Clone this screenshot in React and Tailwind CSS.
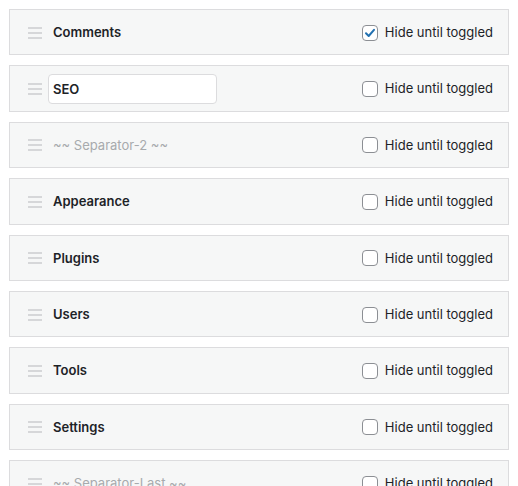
import { useState } from "react";

const items = [
  { label: "Comments", checked: true },
  { label: "SEO", editing: true },
  { label: "~~ Separator-2 ~~", separator: true },
  { label: "Appearance" },
  { label: "Plugins" },
  { label: "Users" },
  { label: "Tools" },
  { label: "Settings" },
  { label: "~~ Separator-Last ~~", separator: true },
];

function Handle() {
  return (
    <div className="flex w-[14px] flex-col gap-[3px]">
      <span className="h-[2px] w-full bg-[#d6d7d9]" />
      <span className="h-[2px] w-full bg-[#d6d7d9]" />
      <span className="h-[2px] w-full bg-[#d6d7d9]" />
    </div>
  );
}

function Row({ item }) {
  const [checked, setChecked] = useState(!!item.checked);
  return (
    <div className="flex h-[46.4px] shrink-0 items-center border border-[#dcdcde] bg-[#f6f7f7] pl-[18px] pr-[15px] pt-[1px]">
      <Handle />
      {item.editing ? (
        <input
          defaultValue={item.label}
          className="ml-[6px] h-[30px] w-[169px] rounded-[4px] border border-[#dcdcde] bg-white px-[4px] text-[13px] font-semibold text-[#1d2327] outline-none"
        />
      ) : (
        <span
          className={
            "ml-[11px] text-[13px] " +
            (item.separator
              ? "font-normal text-[#a7aaad]"
              : "font-semibold text-[#1d2327]")
          }
        >
          {item.label}
        </span>
      )}
      <label className="ml-auto flex cursor-pointer items-center gap-[7px]">
        <span
          onClick={() => setChecked(!checked)}
          className="flex h-[16px] w-[16px] items-center justify-center rounded-[4px] border border-[#8c8f94] bg-white"
        >
          {checked && (
            <svg width="12" height="12" viewBox="0 0 12 12">
              <path
                d="M2 6.3 L4.7 9 L10 2.8"
                fill="none"
                stroke="#2271b1"
                strokeWidth="2"
                strokeLinecap="round"
                strokeLinejoin="round"
              />
            </svg>
          )}
        </span>
        <span className="text-[13px] text-[#1d2327]">Hide until toggled</span>
      </label>
    </div>
  );
}

export default function App() {
  return (
    <div
      className="flex h-[486px] flex-col gap-[10px] overflow-hidden bg-white pl-[9px] pr-[9px] pt-[9px]"
      style={{ fontFamily: "Inter, 'Noto Sans', sans-serif" }}
    >
      {items.map((item) => (
        <Row key={item.label} item={item} />
      ))}
    </div>
  );
}
